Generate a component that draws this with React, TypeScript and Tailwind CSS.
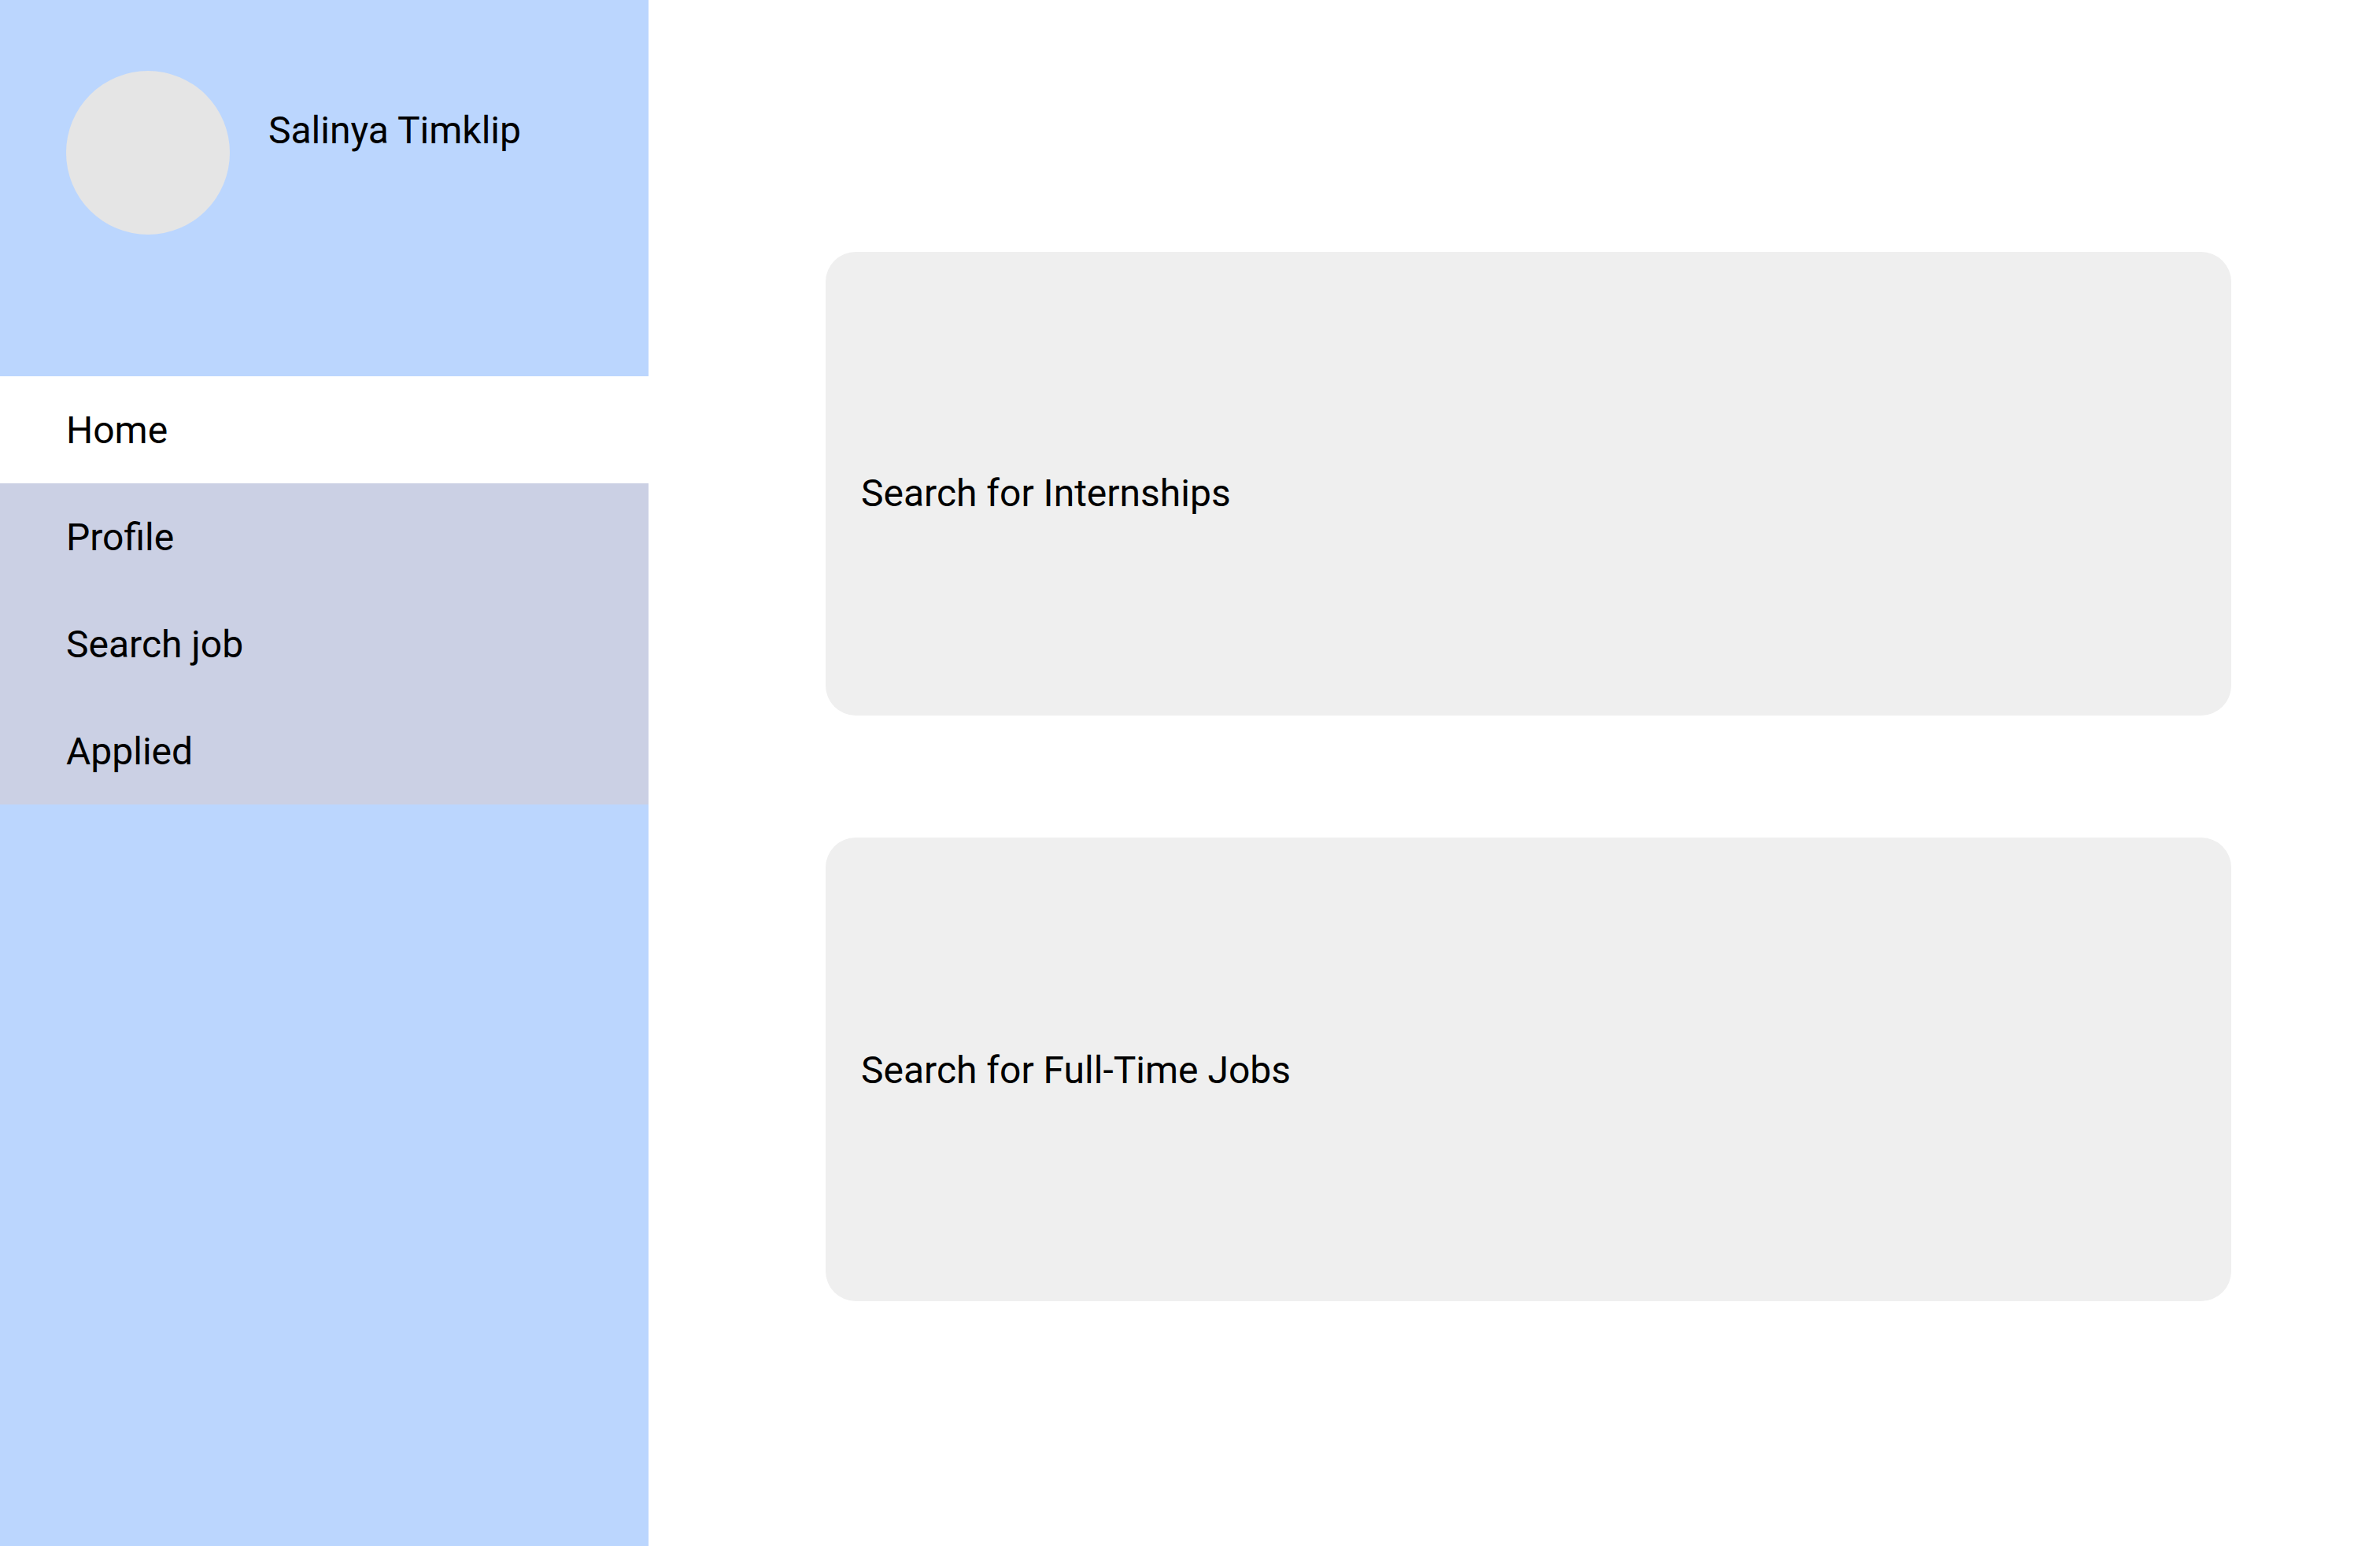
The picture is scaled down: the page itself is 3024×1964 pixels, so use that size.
const navItems = [
  { label: 'Home', active: true },
  { label: 'Profile', active: false },
  { label: 'Search job', active: false },
  { label: 'Applied', active: false }
];

const cards = [
  { label: 'Search for Internships', offset: 'pt-[24px]' },
  { label: 'Search for Full-Time Jobs', offset: 'pt-[2px]' }
];

export default function App() {
  return (
    <div className="flex h-[1964px] w-full overflow-hidden bg-white font-['Roboto',sans-serif] text-black">
      {/* Sidebar */}
      <aside className="flex w-[824px] shrink-0 flex-col bg-[#bbd6fe]">
        <div className="flex h-[478px] items-start pl-[84px] pt-[90px]">
          <div className="h-[208px] w-[208px] rounded-full bg-[#e5e5e5]" />
          <span className="ml-[49px] mt-[40px] text-[48px] leading-normal">Salinya Timklip</span>
        </div>

        <nav className="flex flex-col">
          {navItems.map((item) => (
            <a
              key={item.label}
              href="#"
              className={`flex h-[136px] items-center pl-[84px] pt-[2px] text-[48px] leading-normal ${
                item.active ? 'bg-white' : 'bg-[#cbd0e4]'
              }`}
            >
              {item.label}
            </a>
          ))}
        </nav>
      </aside>

      {/* Main */}
      <main className="flex flex-1 flex-col gap-[155px] pl-[225px] pt-[320px]">
        {cards.map((card) => (
          <button
            key={card.label}
            className={`flex h-[589px] w-[1786px] items-center rounded-[38px] bg-[#efefef] pl-[45px] text-left text-[48px] leading-normal ${card.offset}`}
          >
            {card.label}
          </button>
        ))}
      </main>
    </div>
  );
}
